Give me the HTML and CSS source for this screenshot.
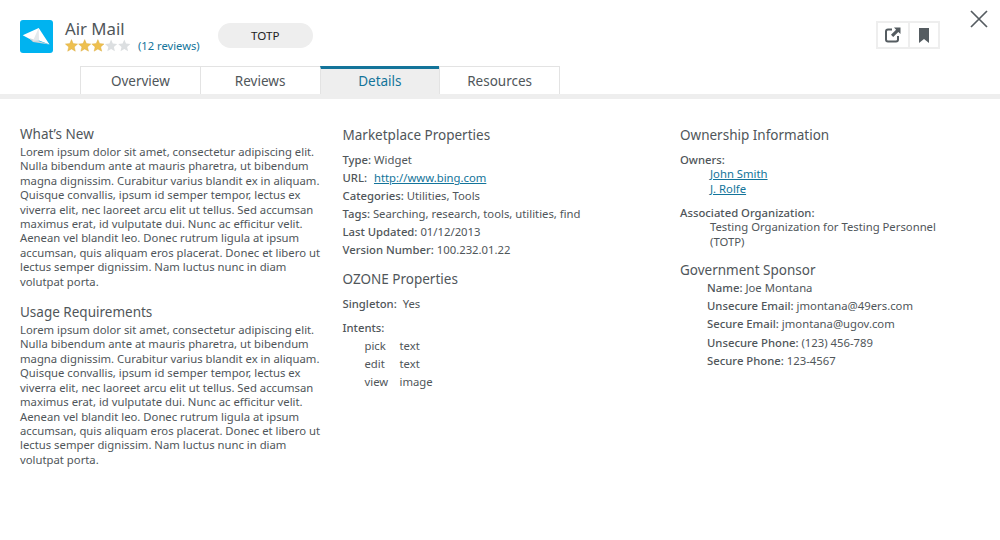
FILE: index.html
```html
<!DOCTYPE html>
<html lang="en">
<head>
  <meta charset="UTF-8">
  <title>Air Mail</title>
  <link rel="stylesheet" href="styles.css">
</head>
<body>
  <!-- Header -->
  <div class="header">
    <svg class="app-icon" width="33" height="33" viewBox="0 0 33 33">
      <rect width="33" height="33" rx="3" fill="#00b3f0"/>
      <path d="M2.7 15.3 L18.7 8 L29.5 24.5 L19 20.5 L13 20.7 Z" fill="#fff"/>
      <path d="M9 18 L29.5 24.5 L13 22 Z" fill="#cfd6da"/>
      <path d="M13 20.7 L18.7 8 L19 20.5 Z" fill="#e4e9ec"/>
    </svg>
    <div class="app-title">
      <div class="app-name">Air Mail</div>
      <div class="rating">
        <svg class="stars" width="67" height="13" viewBox="0 0 67 13">
          <path id="star" d="M6.5 0.6 L8.2 4.6 L12.6 5 L9.3 7.9 L10.3 12.2 L6.5 10 L2.7 12.2 L3.7 7.9 L0.4 5 L4.8 4.6 Z" fill="#eec04f" stroke="#d9a93c" stroke-width="0.4"/>
          <use href="#star" x="13.2"/>
          <use href="#star" x="26.4"/>
          <path class="star-off" d="M46.1 0.6 L47.8 4.6 L52.2 5 L48.9 7.9 L49.9 12.2 L46.1 10 L42.3 12.2 L43.3 7.9 L40 5 L44.4 4.6 Z"/>
          <path class="star-off" d="M59.3 0.6 L61 4.6 L65.4 5 L62.1 7.9 L63.1 12.2 L59.3 10 L55.5 12.2 L56.5 7.9 L53.2 5 L57.6 4.6 Z"/>
        </svg>
        <a class="reviews">(12 reviews)</a>
      </div>
    </div>
    <div class="org-pill">TOTP</div>
    <div class="actions">
      <button class="action">
        <svg width="16" height="16" viewBox="0 0 16 16">
          <path d="M7 2.5 H3 Q1 2.5 1 4.5 V12.5 Q1 14.5 3 14.5 H11 Q13 14.5 13 12.5 V9" fill="none" stroke="#555c61" stroke-width="2"/>
          <path d="M9 0.5 H15.5 V7 L13.3 4.9 L8.2 10 L6 7.8 L11.1 2.7 Z" fill="#555c61"/>
        </svg>
      </button>
      <button class="action">
        <svg width="10" height="15" viewBox="0 0 10 15">
          <path d="M0 0 H10 V15 L5 11 L0 15 Z" fill="#555c61"/>
        </svg>
      </button>
    </div>
    <svg class="close" width="18" height="18" viewBox="0 0 18 18">
      <path d="M1 1 L17 17 M17 1 L1 17" stroke="#555c61" stroke-width="1.7" fill="none"/>
    </svg>
  </div>

  <!-- Tabs -->
  <div class="tabs">
    <div class="tab">Overview</div>
    <div class="tab">Reviews</div>
    <div class="tab active">Details</div>
    <div class="tab">Resources</div>
  </div>

  <!-- Content -->
  <div class="content">
    <div class="col col-left">
      <h3>What’s New</h3>
      <p>Lorem ipsum dolor sit amet, consectetur adipiscing elit. Nulla bibendum ante at mauris pharetra, ut bibendum magna dignissim. Curabitur varius blandit ex in aliquam. Quisque convallis, ipsum id semper tempor, lectus ex viverra elit, nec laoreet arcu elit ut tellus. Sed accumsan maximus erat, id vulputate dui. Nunc ac efficitur velit. Aenean vel blandit leo. Donec rutrum ligula at ipsum accumsan, quis aliquam eros placerat. Donec et libero ut lectus semper dignissim. Nam luctus nunc in diam volutpat porta.</p>
      <h3>Usage Requirements</h3>
      <p>Lorem ipsum dolor sit amet, consectetur adipiscing elit. Nulla bibendum ante at mauris pharetra, ut bibendum magna dignissim. Curabitur varius blandit ex in aliquam. Quisque convallis, ipsum id semper tempor, lectus ex viverra elit, nec laoreet arcu elit ut tellus. Sed accumsan maximus erat, id vulputate dui. Nunc ac efficitur velit. Aenean vel blandit leo. Donec rutrum ligula at ipsum accumsan, quis aliquam eros placerat. Donec et libero ut lectus semper dignissim. Nam luctus nunc in diam volutpat porta.</p>
    </div>

    <div class="col col-mid">
      <h3>Marketplace Properties</h3>
      <div class="props">
        <div><b>Type:</b> Widget</div>
        <div><b>URL:</b>&nbsp; <a class="url">http://www.bing.com</a></div>
        <div><b>Categories:</b> Utilities, Tools</div>
        <div><b>Tags:</b> Searching, research, tools, utilities, find</div>
        <div><b>Last Updated:</b> 01/12/2013</div>
        <div><b>Version Number:</b> 100.232.01.22</div>
      </div>
      <h3 class="second">OZONE Properties</h3>
      <div class="props">
        <div><b>Singleton:</b>&nbsp; Yes</div>
      </div>
      <div class="props intents">
        <div><b>Intents:</b></div>
        <div class="intent"><span>pick</span><span>text</span></div>
        <div class="intent"><span>edit</span><span>text</span></div>
        <div class="intent"><span>view</span><span>image</span></div>
      </div>
    </div>

    <div class="col col-right">
      <h3>Ownership Information</h3>
      <div class="owners">
        <div><b>Owners:</b></div>
        <div class="indent"><a>John Smith</a></div>
        <div class="indent"><a>J. Rolfe</a></div>
      </div>
      <div class="owners org">
        <div><b>Associated Organization:</b></div>
        <div class="indent">Testing Organization for Testing Personnel (TOTP)</div>
      </div>
      <h3 class="sponsor">Government Sponsor</h3>
      <div class="sponsor-info">
        <div><b>Name:</b> Joe Montana</div>
        <div><b>Unsecure Email:</b> jmontana@49ers.com</div>
        <div><b>Secure Email:</b> jmontana@ugov.com</div>
        <div><b>Unsecure Phone:</b> (123) 456-789</div>
        <div><b>Secure Phone:</b> 123-4567</div>
      </div>
    </div>
  </div>
</body>
</html>
```

FILE: styles.css
```css
body {
  margin: 0;
  font-family: "Noto Sans", sans-serif;
  font-size: 11.3px;
  color: #50565a;
  background: #fff;
  overflow: hidden;
}

a {
  color: #13749a;
  text-decoration: underline;
}

/* Header */
.header {
  display: flex;
  align-items: flex-start;
  height: 66px;
  padding-left: 20px;
  position: relative;
}

.app-icon {
  margin-top: 20px;
  flex: none;
}

.app-title {
  margin-left: 12px;
  margin-top: 19px;
}

.app-name {
  font-size: 16.8px;
  line-height: 20px;
}

.rating {
  display: flex;
  align-items: center;
  height: 13px;
}

.stars {
  flex: none;
  margin-right: 6px;
}

.star-off {
  fill: #dcdfe1;
}

.reviews {
  color: #13749a;
  text-decoration: none;
  font-size: 11.2px;
}

.org-pill {
  width: 95px;
  height: 25px;
  margin-left: 18px;
  margin-top: 23px;
  border-radius: 13px;
  background: #eeeeee;
  color: #222;
  text-align: center;
  line-height: 25px;
  font-size: 11.6px;
}

.actions {
  display: flex;
  margin-left: auto;
  margin-right: 60px;
  margin-top: 21px;
  border: 2px solid #eeeeee;
}

.action {
  width: 30px;
  height: 24px;
  padding: 0;
  border: 0;
  background: #fff;
  display: flex;
  align-items: center;
  justify-content: center;
}

.action + .action {
  border-left: 2px solid #eeeeee;
}

.close {
  position: absolute;
  top: 10px;
  right: 12px;
}

/* Tabs */
.tabs {
  display: flex;
  height: 28px;
  padding-left: 80px;
  border-bottom: 5px solid #eeeeee;
}

.tab {
  width: 118.75px;
  border: 1px solid #e3e3e3;
  border-bottom: 0;
  margin-right: -1px;
  text-align: center;
  font-size: 13.5px;
  line-height: 28px;
}

.tab.active {
  background: #eeeeee;
  color: #13749a;
  border-top: 3px solid #13749a;
  line-height: 24px;
}

/* Content */
.content {
  display: flex;
  padding: 27px 20px 0;
}

.col-left {
  width: 300px;
  margin-right: 22.5px;
  margin-top: -3px;
}

.col-mid {
  width: 316px;
  margin-right: 21.5px;
}

.col-right {
  width: 280px;
}

h3 {
  font-size: 13.5px;
  font-weight: normal;
  line-height: 18px;
  margin: 0;
}

.col-left h3 {
  line-height: 22px;
}

p {
  margin: 0 0 12px;
  line-height: 14.4px;
}

.props {
  margin-top: 7px;
  line-height: 18px;
}

.url {
  margin-left: 1px;
}

b {
  font-weight: 500;
}

.second {
  margin-top: 11px;
}

.intents {
  margin-top: 6px;
}

.intent {
  display: flex;
  padding-left: 22px;
}

.intent span:first-child {
  width: 35px;
}

.owners {
  margin-top: 8.5px;
  line-height: 14.5px;
}

.indent {
  padding-left: 30px;
}

.org {
  margin-top: 9.5px;
}

.sponsor {
  margin-top: 12px;
}

.sponsor-info {
  padding-left: 27px;
  line-height: 18.2px;
}
```
